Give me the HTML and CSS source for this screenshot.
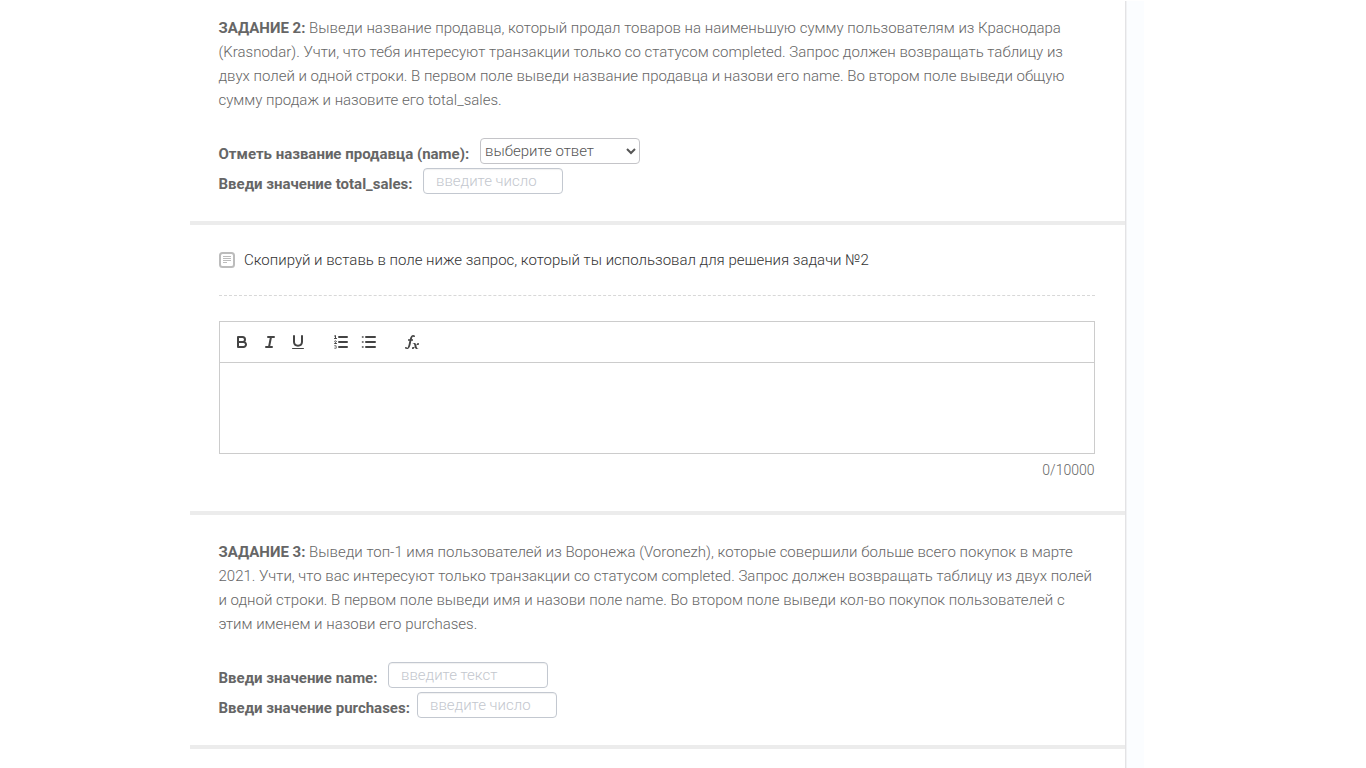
FILE: index.html
```html
<!DOCTYPE html>
<html lang="ru">
<head>
<meta charset="utf-8">
<title>Задания</title>
<link rel="stylesheet" href="styles.css">
</head>
<body>
<div class="page">
<main class="sheet">
  <section class="task">
    <p class="text"><b>ЗАДАНИЕ 2:</b> Выведи название продавца, который продал товаров на наименьшую сумму пользователям из Краснодара<br>(Krasnodar). Учти, что тебя интересуют транзакции только со статусом completed. Запрос должен возвращать таблицу из<br>двух полей и одной строки. В первом поле выведи название продавца и назови его name. Во втором поле выведи общую<br>сумму продаж и назовите его total_sales.</p>
    <div class="fields">
      <div class="row"><label class="label w-seller" for="seller">Отметь название продавца (name):</label><select class="control select wide" id="seller"><option>выберите ответ</option></select></div>
      <div class="row"><label class="label w-sales" for="sales">Введи значение total_sales:</label><input class="control" id="sales" placeholder="введите число"></div>
    </div>
  </section>
  <section class="answer">
    <div class="heading">
      <svg class="note" viewBox="0 0 16 16"><rect x="1" y="1" width="14" height="14" rx="2.500" fill="none" stroke="#bcbcbc" stroke-width="2"/><path d="M4 4.500h8M4 6.500h8M4 8.500h8M4 10.500h4" stroke="#bcbcbc"/></svg>
      <span>Скопируй и вставь в поле ниже запрос, который ты использовал для решения задачи №2</span>
    </div>
    <div class="editor">
      <div class="toolbar">
        <svg class="tool" viewBox="0 0 18 18"><path class="s" d="M5 4h4.500A2.500 2.500 0 0 1 12 6.500 2.500 2.500 0 0 1 9.500 9H5zM5 9h5.500A2.500 2.500 0 0 1 13 11.500 2.500 2.500 0 0 1 10.500 14H5z"/></svg>
        <svg class="tool" viewBox="0 0 18 18"><path class="s" d="M7 4h6M5 14h6M8 14l2-10"/></svg>
        <svg class="tool" viewBox="0 0 18 18"><path class="s" d="M5 3v6a4.012 4.012 0 0 0 8 0V3"/><rect class="f" x="3" y="15" width="12" height="1" rx=".5"/></svg>
        <svg class="tool gap" viewBox="0 0 18 18"><path class="s" d="M7 4h8M7 9h8M7 14h8"/><path class="t" d="M2.500 5.500h2M3.500 5.500v-3l-1 .5"/><path class="t" d="M4.500 10.500h-2c0-.7 1.850-1.100 1.850-2 0-.8-1.200-.9-1.850-.2"/><path class="t faint" d="M2.500 12.700c.8-.4 1.900-.2 1.900.5 0 .5-.4.700-.9.700.500 0 1 .2 1 .8 0 .900-1.200.900-2 .500"/></svg>
        <svg class="tool" viewBox="0 0 18 18"><path class="s" d="M6 4h9M6 9h9M6 14h9"/><path class="d" d="M2.500 4h.5M2.500 9h.5M2.500 14h.5"/></svg>
        <svg class="tool gap" viewBox="0 0 18 18"><path class="f" d="M11.759 2.482a2.561 2.561 0 0 0-3.530.607A7.656 7.656 0 0 0 6.800 6.200C6.109 9.188 5.275 14.677 4.150 14.927a1.545 1.545 0 0 0-1.300-.933A.922.922 0 0 0 2 15.036S1.954 16 4.119 16s3.091-2.691 3.700-5.553c.177-.826.360-1.726.554-2.600L8.775 6.200c.381-1.421.807-2.521 1.306-2.676a1.014 1.014 0 0 0 1.020.560.966.966 0 0 0 .658-1.602z"/><rect class="f" x="5" y="6.200" width="5" height="1.600" rx=".15"/><path class="f" d="M13.663 12.027a1.662 1.662 0 0 1 .266-.276q.193.069.456.138a2.100 2.100 0 0 0 .535.069 1.075 1.075 0 0 0 .767-.300 1.044 1.044 0 0 0 .314-.800.840.840 0 0 0-.238-.619.800.800 0 0 0-.594-.239 1.154 1.154 0 0 0-.781.300 4.607 4.607 0 0 0-.781 1q-.091.150-.218.346l-.246.380c-.068-.288-.137-.582-.212-.885-.459-1.847-2.494-.984-2.941-.800-.482.200-.353.647-.094.529a.869.869 0 0 1 1.281.585c.217.751.377 1.436.527 2.038a5.688 5.688 0 0 1-.362.467 2.690 2.690 0 0 1-.264.271q-.221-.080-.471-.147a2.029 2.029 0 0 0-.522-.066 1.079 1.079 0 0 0-.768.300A1.058 1.058 0 0 0 9 15.131a.820.820 0 0 0 .832.852 1.134 1.134 0 0 0 .787-.300 5.110 5.110 0 0 0 .776-.993q.141-.219.215-.340c.046-.076.122-.194.223-.346a2.786 2.786 0 0 0 .918 1.726 2.582 2.582 0 0 0 2.376-.185c.317-.181.212-.565 0-.494a.807.807 0 0 1-.860-.115c-.500-.500-.700-1.500-.900-2.240.100-.220.200-.500.296-.669z"/></svg>
      </div>
    </div>
    <div class="counter">0/10000</div>
  </section>
  <section class="task">
    <p class="text"><b>ЗАДАНИЕ 3:</b> Выведи топ-1 имя пользователей из Воронежа (Voronezh), которые совершили больше всего покупок в марте<br>2021. Учти, что вас интересуют только транзакции со статусом completed. Запрос должен возвращать таблицу из двух полей<br>и одной строки. В первом поле выведи имя и назови поле name. Во втором поле выведи кол-во покупок пользователей с<br>этим именем и назови его purchases.</p>
    <div class="fields">
      <div class="row"><label class="label w-name" for="name">Введи значение name:</label><input class="control wide" id="name" placeholder="введите текст"></div>
      <div class="row"><label class="label w-purchases" for="purchases">Введи значение purchases:</label><input class="control" id="purchases" placeholder="введите число"></div>
    </div>
  </section>
</main>
<aside class="strip"></aside>
</div>
</body>
</html>
```

FILE: styles.css
```css
* { box-sizing: border-box; }
body { margin: 0; background: #fff; overflow: hidden; font: 300 15px/24px Roboto, sans-serif; color: #666; }
.page { display: flex; height: 768px; padding-left: 190px; overflow: hidden; }
.sheet { width: 935px; margin-top: -9px; }
.strip { width: 19px; margin-top: 1px; background: #fbfdff; border-left: 1px solid #e3e3e5; box-shadow: inset 1px 0 #f1f2f4; }
.task { height: 234px; padding: 25px 0 0 28.5px; border-bottom: 4px solid #ececec; }
.text { margin: 0 0 26px; white-space: nowrap; }
b, .label { font-weight: 700; }
.row { display: flex; height: 30px; }
.label { padding-top: 4px; white-space: nowrap; }
.w-seller { width: 261.5px; }
.w-sales { width: 204.5px; }
.w-name { width: 169.5px; }
.w-purchases { width: 198.5px; }
.control { width: 140px; height: 26px; margin: 0; padding: 0 12px; border: 1px solid #c3c8d0; border-radius: 4px; background: #fff; color: #555; font: 300 15px Roboto, sans-serif; box-shadow: inset 0 1px 1px rgba(0,0,0,.06); outline: 0; }
.control::placeholder { color: #c3c7ce; opacity: 1; }
.wide { width: 160px; }
.select { padding: 0; border-color: #c4c4c8; box-shadow: none; }
.answer { height: 290px; padding: 23px 30px 0 29px; border-bottom: 4px solid #ececec; }
.heading { display: flex; gap: 9px; height: 48px; border-bottom: 1px dashed #d8d8d8; color: #333; white-space: nowrap; }
.note { width: 16px; height: 16px; margin-top: 4px; }
.editor { height: 133px; margin-top: 25px; border: 1px solid #ccc; }
.toolbar { display: flex; height: 41px; padding: 11px 0 0 13px; border-bottom: 1px solid #ccc; }
.tool { width: 18px; height: 18px; margin-right: 10px; }
.gap { margin-left: 15px; }
.s { fill: none; stroke: #444; stroke-width: 2; stroke-linecap: round; stroke-linejoin: round; }
.t { fill: none; stroke: #444; stroke-width: 1; stroke-linecap: round; }
.d { stroke: #444; stroke-width: 1.6; stroke-linecap: round; }
.faint { stroke-width: .7; }
.f { fill: #444; }
.counter { margin: 4px .5px 0 0; text-align: right; font-size: 14px; }
```
